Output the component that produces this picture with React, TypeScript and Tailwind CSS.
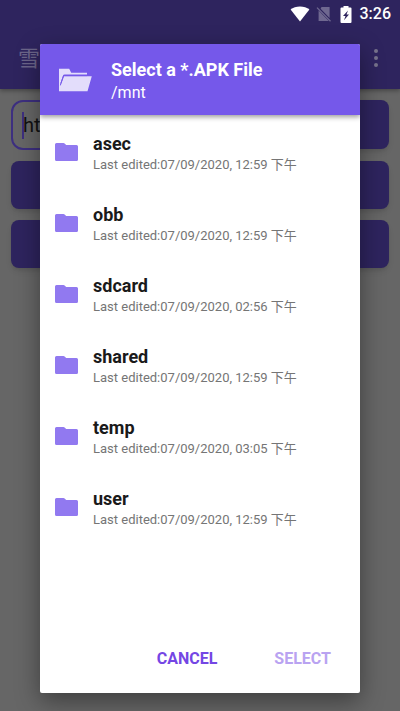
import React from "react";

const folders = [
  { name: "asec", edited: "07/09/2020, 12:59 下午" },
  { name: "obb", edited: "07/09/2020, 12:59 下午" },
  { name: "sdcard", edited: "07/09/2020, 02:56 下午" },
  { name: "shared", edited: "07/09/2020, 12:59 下午" },
  { name: "temp", edited: "07/09/2020, 03:05 下午" },
  { name: "user", edited: "07/09/2020, 12:59 下午" },
];

function StatusBar() {
  return (
    <div className="flex h-7 items-center justify-end pr-[9px] text-white">
      <svg className="mr-1.5 h-4 w-5" viewBox="0 0 20 16" fill="currentColor">
        <path d="M10 15.6.6 3.6C3 1.600 6.300.4 10 .4s7 1.200 9.400 3.200z" />
      </svg>
      <svg className="mr-2 h-4 w-4" viewBox="0 0 16 16">
        <path d="M5.500 1h8.100v11L4.600 2.800zM2.600 4.600 12.800 15H2.600z" fill="#6f6890" />
        <path d="M1 1.600 14.500 15.200" stroke="#6f6890" strokeWidth="1.300" />
      </svg>
      <svg className="mr-2 h-[17px] w-3" viewBox="0 0 12 17">
        <path d="M3.500 0h5v1.600h2q1 0 1 1V16q0 1-1 1h-9q-1 0-1-1V2.600q0-1 1-1h2z" fill="currentColor" />
        <path d="M8 4.400 3 10h2.500L4 14.200 9 8.600H6.500z" fill="#2e245e" />
      </svg>
      <span className="text-base font-medium">3:26</span>
    </div>
  );
}

function FolderIcon() {
  return (
    <svg className="mb-[3px] h-[18px] w-[23px] shrink-0" viewBox="0 0 23 18" fill="#9179f0">
      <path d="M1.500 0h7q.7 0 1.100.5L11.200 2H21.500q1.500 0 1.500 1.500v13q0 1.500-1.500 1.500h-20Q0 18 0 16.500v-15Q0 0 1.500 0z" />
    </svg>
  );
}

function OpenFolderIcon() {
  return (
    <svg className="h-6 w-[33px] shrink-0" viewBox="0 0 33 24" fill="#e3ddfb">
      <path d="M0 .8h10.200l2 4H28v1.800H5.600Q4.400 6.600 4 7.800L.8 17.200 1.700 17.500 5 8.300h27.800L28.500 23.200H0z" />
      <path d="M1.800 15.500 4.600 7.600H28" fill="none" stroke="#7659ea" strokeWidth="1" />
    </svg>
  );
}

export default function App() {
  return (
    <div className="relative min-h-screen bg-[#666666] font-['Roboto','Noto_Sans_CJK_SC',sans-serif]">
      <header className="h-[89px] bg-[#2e245e] shadow-[0_2px_4px_rgba(0,0,0,0.3)]">
        <StatusBar />
        <div className="flex h-[60px] items-center justify-between pr-3 pl-[18px]">
          <h1 className="text-[22px] text-[#6b6589]">雪</h1>
          <button type="button" aria-label="More options" className="flex flex-col items-center gap-[3px] px-2.5">
            <span className="size-1 rounded-full bg-[#77738c]" />
            <span className="size-1 rounded-full bg-[#77738c]" />
            <span className="size-1 rounded-full bg-[#77738c]" />
          </button>
        </div>
      </header>

      <main className="flex flex-col gap-[11px] px-[11px] pt-[11px]">
        <div className="flex gap-3">
          <div className="flex h-[50px] min-w-0 flex-1 items-center rounded-xl border-2 border-[#3d2f80] pl-[9px]">
            <span className="h-[27px] w-[2px] shrink-0 bg-[#3d2f80]" />
            <input aria-label="Address" defaultValue="ht" className="-ml-px w-full min-w-0 text-xl text-[#111111] outline-none" />
          </div>
          <button type="button" aria-label="Open" className="h-[49px] w-20 rounded-lg bg-[#2e245e] shadow-md" />
        </div>
        <button type="button" aria-label="Choose file" className="h-12 rounded-lg bg-[#2e245e] shadow-md" />
        <button type="button" aria-label="Install" className="h-12 rounded-lg bg-[#2e245e] shadow-md" />
      </main>

      <div className="absolute inset-0 flex px-10 pt-11 pb-[18px]">
        <section
          role="dialog"
          aria-labelledby="dialog-title"
          className="flex flex-1 flex-col overflow-hidden rounded-xs bg-white shadow-[0_8px_24px_rgba(0,0,0,0.4)]"
        >
          <div className="flex h-[71px] shrink-0 items-center gap-[19px] bg-[#7558ea] pl-[19px] text-white shadow-[0_2px_5px_rgba(0,0,0,0.4)]">
            <OpenFolderIcon />
            <div className="pt-[3px]">
              <h2 id="dialog-title" className="text-lg leading-6 font-bold">
                Select a *.APK File
              </h2>
              <p className="text-base leading-[22px]">/mnt</p>
            </div>
          </div>

          <ul className="flex-1 pt-[3px]">
            {folders.map((folder) => (
              <li key={folder.name} className="flex h-[71px] items-center gap-[15px] pl-[15px]">
                <FolderIcon />
                <div>
                  <p className="text-lg leading-[22px] font-bold text-[#1a1a1a]">{folder.name}</p>
                  <p className="text-[13px] leading-5 text-[#757575]">Last edited:{folder.edited}</p>
                </div>
              </li>
            ))}
          </ul>

          <div className="flex justify-end gap-[57px] pr-[29px] pb-[22px] text-base leading-6 font-bold">
            <button type="button" className="text-[#7446e4]">
              CANCEL
            </button>
            <button type="button" disabled className="text-[#b9a3f1]">
              SELECT
            </button>
          </div>
        </section>
      </div>
    </div>
  );
}
